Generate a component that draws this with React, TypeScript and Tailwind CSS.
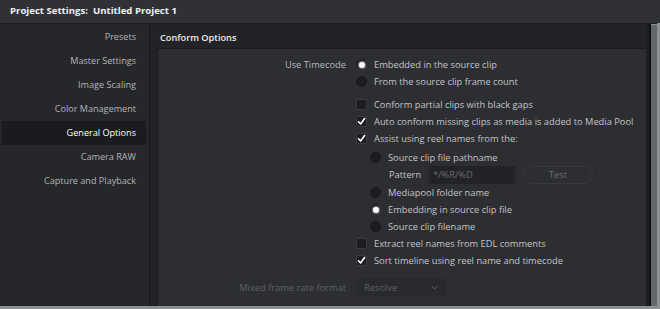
import React from "react";

const font = { fontFamily: '"Open Sans", "Noto Sans", sans-serif' };

function Radio({ on }: { on?: boolean }) {
  return (
    <span className="flex h-[11px] w-[11px] shrink-0 items-center justify-center rounded-full border border-[#16171a] bg-[#1c1d20]">
      {on && <span className="h-[6px] w-[6px] rounded-full bg-white shadow-[0_0_2px_1px_rgba(255,255,255,0.45)]" />}
    </span>
  );
}

function Check({ on }: { on?: boolean }) {
  return (
    <span className="flex h-[11px] w-[11px] shrink-0 items-center justify-center rounded-[1px] border border-[#3a3b3f] bg-[#1c1d20]">
      {on && (
        <svg width="9" height="9" viewBox="0 0 9 9">
          <path d="M1.5 4.8 L3.6 7 L7.6 1.5" stroke="white" strokeWidth="1.6" fill="none" strokeLinecap="round" strokeLinejoin="round" />
        </svg>
      )}
    </span>
  );
}

function Row({ h = "h-[17px]", mt = "", label, children }: { h?: string; mt?: string; label?: string; children: React.ReactNode }) {
  return (
    <div className={`flex items-center ${h} ${mt}`}>
      <div className="w-[198px] shrink-0 pr-[10px] text-right text-[#b9b9bb]">{label}</div>
      <div className="flex items-center">{children}</div>
    </div>
  );
}

export default function App() {
  const items = ["Presets", "Master Settings", "Image Scaling", "Color Management", "General Options", "Camera RAW", "Capture and Playback"];
  return (
    <div className="flex h-[309px] w-[660px] flex-col overflow-hidden bg-[#8d9093] text-[9.3px]" style={font}>
      <div className="flex h-[23px] shrink-0 items-center bg-[#303136] pl-[10px] text-[9.6px] font-bold text-[#f0f0f0]">
        Project Settings:&nbsp; Untitled Project 1
      </div>
      <div className="flex h-[283px] w-[657px] border-t border-[#1c1d20]">
        <div className="flex w-[150px] shrink-0 flex-col border-r border-[#151618] bg-[#26272b] pt-[1px] pl-[2px] text-[9.1px]">
          {items.map((t) => (
            <div
              key={t}
              className={`flex h-[24px] w-[144px] items-center justify-end pr-[10px] ${t === "General Options" ? "bg-[#1a1b1e] text-white" : "text-[#b4b4b6]"}`}
            >
              {t}
            </div>
          ))}
        </div>
        <div className="flex flex-1 flex-col bg-[#222327]">
          <div className="flex h-[24px] shrink-0 items-center pl-[10px] pt-[3px] text-[9.2px] font-semibold text-[#ececec]">Conform Options</div>
          <div className="ml-[7px] flex-1 border-l border-t border-[#1a1b1e] bg-[#2d2e32] pt-[7px] text-[#c4c4c6]">
            <Row label="Use Timecode">
              <Radio on />
              <span className="ml-[7px]">Embedded in the source clip</span>
            </Row>
            <Row>
              <Radio />
              <span className="ml-[7px]">From the source clip frame count</span>
            </Row>
            <Row mt="mt-[6px]">
              <Check />
              <span className="ml-[7px]">Conform partial clips with black gaps</span>
            </Row>
            <Row>
              <Check on />
              <span className="ml-[7px]">Auto conform missing clips as media is added to Media Pool</span>
            </Row>
            <Row>
              <Check on />
              <span className="ml-[7px]">Assist using reel names from the:</span>
            </Row>
            <Row mt="mt-[2px]">
              <span className="ml-[14px] flex items-center">
                <Radio />
                <span className="ml-[7px]">Source clip file pathname</span>
              </span>
            </Row>
            <Row h="h-[18px]">
              <span className="ml-[33px] w-[40px]">Pattern</span>
              <span className="flex h-[18px] w-[86px] items-center bg-[#222327] pl-[4px] text-[#6b6c70]">*/%R/%D</span>
              <span className="ml-[8px] flex h-[18px] w-[70px] items-center justify-center rounded-full border border-[#37383c] text-[#6b6c70]">Test</span>
            </Row>
            <Row>
              <span className="ml-[14px] flex items-center">
                <Radio />
                <span className="ml-[7px]">Mediapool folder name</span>
              </span>
            </Row>
            <Row>
              <span className="ml-[14px] flex items-center">
                <Radio on />
                <span className="ml-[7px]">Embedding in source clip file</span>
              </span>
            </Row>
            <Row>
              <span className="ml-[14px] flex items-center">
                <Radio />
                <span className="ml-[7px]">Source clip filename</span>
              </span>
            </Row>
            <Row>
              <Check />
              <span className="ml-[7px]">Extract reel names from EDL comments</span>
            </Row>
            <Row>
              <Check on />
              <span className="ml-[7px]">Sort timeline using reel name and timecode</span>
            </Row>
            <div className="mt-[9px] flex h-[19px] items-center">
              <div className="w-[198px] shrink-0 pr-[10px] text-right text-[#5f6064]">Mixed frame rate format</div>
              <div className="flex h-[19px] w-[90px] items-center justify-between bg-[#292a2e] pl-[8px] pr-[8px] text-[#5f6064]">
                <span>Resolve</span>
                <svg width="7" height="5" viewBox="0 0 7 5"><path d="M0.5 1 L3.5 4 L6.5 1" stroke="#5f6064" fill="none" /></svg>
              </div>
            </div>
          </div>
        </div>
        <div className="w-[3px] bg-[#1e1f22]" />
        <div className="w-[2px] bg-[#0f1012]" />
        <div className="mt-[1px] w-[6px] bg-[#63666a]" />
      </div>
    </div>
  );
}
